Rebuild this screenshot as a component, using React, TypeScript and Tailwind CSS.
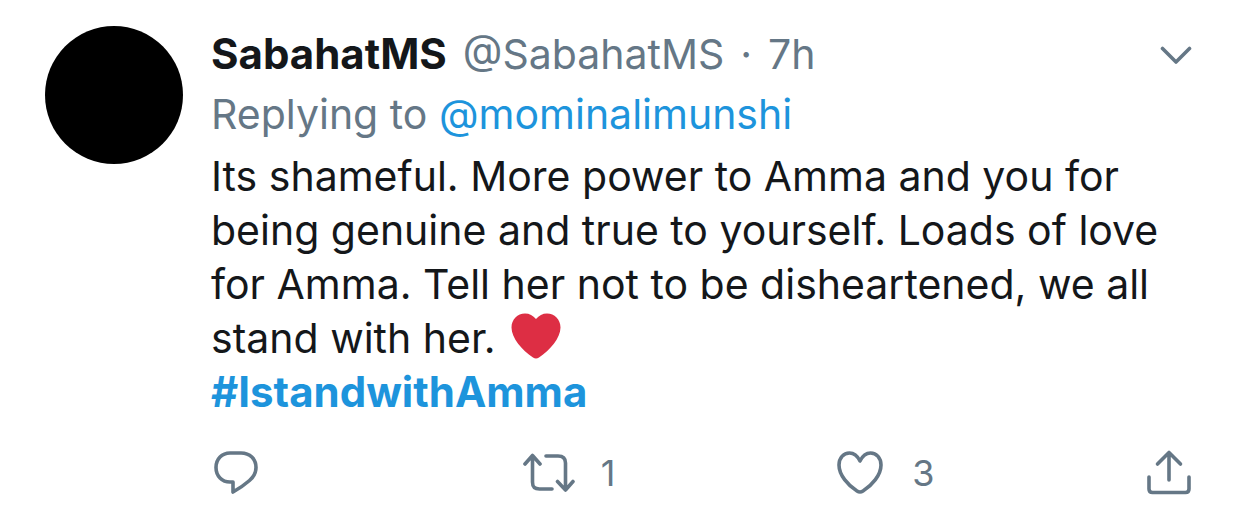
import { useState } from 'react'

const iconProps = {
  fill: 'none',
  stroke: 'currentColor',
  strokeWidth: 3.6,
  strokeLinecap: 'round',
  strokeLinejoin: 'round',
  'aria-hidden': true
} as const

export default function App() {
  const [liked, setLiked] = useState(false)
  const [retweeted, setRetweeted] = useState(false)

  return (
    <article className="flex gap-7 bg-white pt-6 pr-[50px] pb-4 pl-[45px] font-['Inter',sans-serif] text-[41px] text-[#14171a]">
      <a href="#profile" aria-label="SabahatMS" className="mt-0.5 size-[138px] shrink-0 rounded-full bg-black" />

      <div className="min-w-0 flex-1">
        <header className="flex items-center justify-between">
          <div className="flex gap-4 leading-[60px] text-[#657786]">
            <a href="#profile" className="text-[42px] font-bold text-[#14171a]">SabahatMS</a>
            <span>@SabahatMS</span>
            <span>·</span>
            <time>7h</time>
          </div>
          <button aria-label="More" className="text-[#657786]">
            <svg {...iconProps} width="34" height="24" viewBox="0 0 34 24">
              <path d="M4.5 6.5l13.5 13.5 13.5-13.5" />
            </svg>
          </button>
        </header>

        <p className="leading-[60px] text-[#657786]">
          Replying to <a href="#mominalimunshi" className="text-[#1d94dc]">@mominalimunshi</a>
        </p>

        <p className="mt-[5px] leading-[54px]">
          Its shameful. More power to Amma and you for being genuine and true to yourself. Loads of love for Amma. Tell her not to be disheartened, we all stand with her.{' '}
          <svg className="ml-1 inline-block align-[-6px]" width="50" height="46" viewBox="0 0 50 46" role="img" aria-label="Red heart">
            <path fill="#dd2e44" d="M25 6C28 2.500 31.500.5 36 .5 43.500.5 49.500 6.500 49.500 14.500 49.500 25 39 37 28 44.500Q25 46.500 22 44.500C11 37 .5 25 .5 14.500.5 6.500 6.500.5 14 .5 18.500.5 22 2.500 25 6z" />
          </svg>
          <br />
          <a href="#hashtag" className="text-[42px] font-bold text-[#1d94dc]">#IstandwithAmma</a>
        </p>

        <footer className="mt-6 flex items-center text-[36px] leading-[60px] text-[#657786]">
          <div className="flex-1">
            <button aria-label="Reply" className="block">
              <svg {...iconProps} width="50" height="50" viewBox="0 0 50 50">
                <path d="M19 5h11c9 0 15 6 15 14.5 0 5.500-2.500 9.500-6.500 13-4.500 4-9.500 7.500-16.500 11.500V34h-3C11 34 5 28 5 19.500S11 5 19 5z" />
              </svg>
            </button>
          </div>
          <div className="flex-1">
            <button aria-label="Retweet" aria-pressed={retweeted} onClick={() => setRetweeted(!retweeted)} className="flex items-center gap-6">
              <svg {...iconProps} width="54" height="50" viewBox="0 0 54 50">
                <path d="M2 16l7.500-8.500 7.500 8.500M9.500 8v26c0 5 2 7 7 7H29M23 8h12c5 0 7.500 2 7.500 7v27M34.500 33.500l8 8.500 7.500-8.500" />
              </svg>
              <span>{retweeted ? 2 : 1}</span>
            </button>
          </div>
          <div className="flex-1">
            <button aria-label="Like" aria-pressed={liked} onClick={() => setLiked(!liked)} className="flex items-center gap-7">
              <svg {...iconProps} width="50" height="50" viewBox="0 0 50 50">
                <path d="M26 13C23.500 8 20 5 15.500 5 9.500 5 5 10 5 17 5 27 14 37.500 23 43Q26 45 29 43C38 37.500 47 27 47 17 47 10 42.500 5 36.500 5 32 5 28.500 8 26 13z" />
              </svg>
              <span>{liked ? 4 : 3}</span>
            </button>
          </div>
          <button aria-label="Share">
            <svg {...iconProps} width="46" height="50" viewBox="0 0 46 50">
              <path d="M3 29v12c0 2.500 1 3.500 3.500 3.500h33c2.500 0 3.500-1 3.500-3.500V29M23 32V5M11.500 16L23 4.500 34.500 16" />
            </svg>
          </button>
        </footer>
      </div>
    </article>
  )
}
